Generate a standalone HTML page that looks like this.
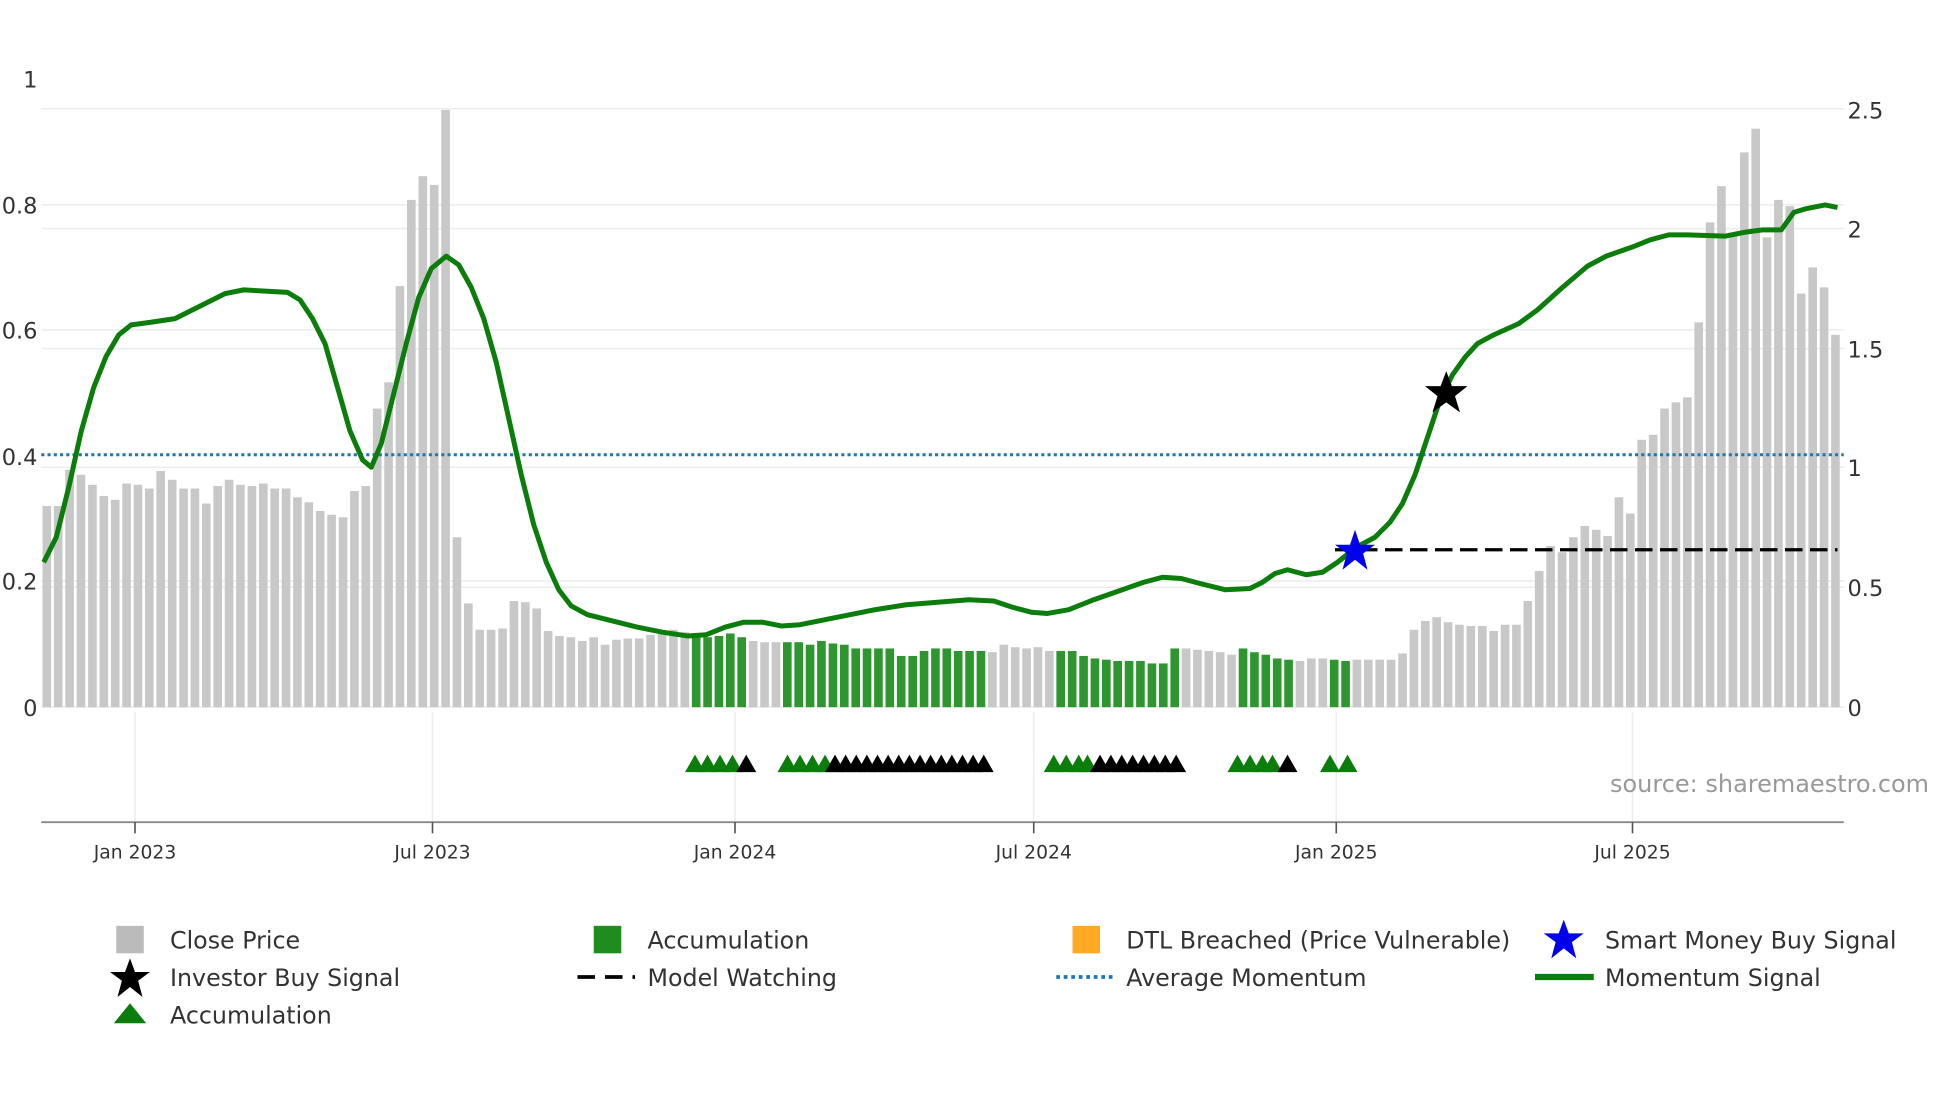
<!DOCTYPE html>
<html><head><meta charset="utf-8">
<style>
html,body{margin:0;padding:0;background:#fff;}
svg{display:block;}
text{font-family:"DejaVu Sans","Liberation Sans",sans-serif;fill:#333;}
</style></head>
<body>
<svg id="s" width="1960" height="1102" viewBox="0 0 1568 882" preserveAspectRatio="none" xmlns="http://www.w3.org/2000/svg">
<rect width="1568" height="882" fill="#fff"/>
<g stroke="#ececec" stroke-width="1.2">
<line x1="33" y1="87" x2="1475" y2="87"/>
<line x1="33" y1="164" x2="1475" y2="164"/>
<line x1="33" y1="183" x2="1475" y2="183"/>
<line x1="33" y1="264" x2="1475" y2="264"/>
<line x1="33" y1="279" x2="1475" y2="279"/>
<line x1="33" y1="374" x2="1475" y2="374"/>
<line x1="33" y1="465" x2="1475" y2="465"/>
<line x1="33" y1="470" x2="1475" y2="470"/>
<line x1="33" y1="566" x2="1475" y2="566"/>
<line x1="108" y1="570" x2="108" y2="658"/>
<line x1="346" y1="570" x2="346" y2="658"/>
<line x1="588" y1="570" x2="588" y2="658"/>
<line x1="827" y1="570" x2="827" y2="658"/>
<line x1="1069" y1="570" x2="1069" y2="658"/>
<line x1="1306" y1="570" x2="1306" y2="658"/>
</g>
<g id="bars"></g>
<g id="tris"></g>
<line x1="33" y1="364" x2="1475" y2="364" stroke="#1f77b4" stroke-width="2.4" stroke-dasharray="2.5,2.5"/>
<line x1="1068" y1="440" x2="1470" y2="440" stroke="#000" stroke-width="2.6" stroke-dasharray="14,6"/>
<path fill="none" stroke="#0a7d0a" stroke-width="4" stroke-linejoin="round" d="M35,450 L45,430 L55,390 L65,345 L75,310 L85,285 L95,268 L105,260 L120,258 L140,255 L160,245 L180,235 L195,232 L230,234 L240,240 L250,255 L260,275 L270,310 L280,345 L290,368 L297,374 L305,355 L315,315 L325,275 L335,238 L345,215 L357,205 L367,212 L377,230 L387,255 L397,290 L407,335 L417,380 L427,420 L437,450 L447,472 L457,485 L470,492 L490,497 L510,502 L530,506 L550,509 L565,508 L580,502 L595,498 L610,498 L625,501 L640,500 L660,496 L680,492 L700,488 L725,484 L750,482 L775,480 L795,481 L810,486 L825,490 L838,491 L855,488 L875,480 L895,473 L915,466 L930,462 L945,463 L960,467 L980,472 L1000,471 L1010,466 L1020,459 L1030,456 L1045,460 L1058,458 L1070,450 L1085,438 L1100,430 L1112,418 L1122,403 L1132,380 L1142,350 L1152,320 L1162,300 L1172,286 L1182,275 L1195,268 L1215,259 L1230,248 L1250,230 L1270,213 L1285,205 L1305,198 L1320,192 L1335,188 L1350,188 L1380,189 L1395,186 L1410,184 L1425,184 L1435,170 L1445,167 L1460,164 L1470,166"/>
<path d="M1157,297 L1161.5,309 L1174,309 L1164,317 L1168,330 L1157,322 L1146,330 L1150,317 L1140,309 L1152.5,309 Z" fill="#000"/>
<path d="M1084,424 L1088,436 L1100,436 L1090.5,443 L1094,456 L1084,448 L1074,456 L1077.5,443 L1068,436 L1080,436 Z" fill="#0000ee"/>
<line x1="33" y1="658" x2="1475" y2="658" stroke="#888" stroke-width="1.5"/>
<g stroke="#555" stroke-width="1.3">
<line x1="108" y1="658" x2="108" y2="667"/><line x1="346" y1="658" x2="346" y2="667"/>
<line x1="588" y1="658" x2="588" y2="667"/><line x1="827" y1="658" x2="827" y2="667"/>
<line x1="1069" y1="658" x2="1069" y2="667"/><line x1="1306" y1="658" x2="1306" y2="667"/>
</g>
<g font-size="15" text-anchor="middle">
<text x="108" y="687">Jan 2023</text><text x="346" y="687">Jul 2023</text>
<text x="588" y="687">Jan 2024</text><text x="827" y="687">Jul 2024</text>
<text x="1069" y="687">Jan 2025</text><text x="1306" y="687">Jul 2025</text>
</g>
<g font-size="18" text-anchor="end">
<text x="30" y="70">1</text><text x="30" y="171">0.8</text><text x="30" y="271">0.6</text>
<text x="30" y="372">0.4</text><text x="30" y="472">0.2</text><text x="30" y="573">0</text>
</g>
<g font-size="18">
<text x="1478" y="95">2.5</text><text x="1478" y="190">2</text><text x="1478" y="286">1.5</text>
<text x="1478" y="381">1</text><text x="1478" y="477">0.5</text><text x="1478" y="573">0</text>
</g>
<text x="1288" y="634" font-size="19.2" style="fill:#999">source: sharemaestro.com</text>
<g font-size="19">
<rect x="93" y="741" width="22" height="22" fill="#bbb"/><text x="136" y="759">Close Price</text>
<rect x="475" y="741" width="22" height="22" fill="#1e8c1e"/><text x="518" y="759">Accumulation</text>
<rect x="858" y="741" width="22" height="22" fill="#ffaa22"/><text x="901" y="759">DTL Breached (Price Vulnerable)</text>
<path d="M1251,736 L1255,747 L1267,747 L1257.5,754 L1261,767 L1251,759 L1241,767 L1244.5,754 L1235,747 L1247,747 Z" fill="#0000ee"/>
<text x="1284" y="759">Smart Money Buy Signal</text>
<path d="M104,767 L108,778 L120,778 L110.5,785 L114,798 L104,790 L94,798 L97.5,785 L88,778 L100,778 Z" fill="#000"/>
<text x="136" y="789">Investor Buy Signal</text>
<line x1="462" y1="782" x2="508" y2="782" stroke="#000" stroke-width="3" stroke-dasharray="14,8"/>
<text x="518" y="789">Model Watching</text>
<line x1="845" y1="782" x2="891" y2="782" stroke="#1f77b4" stroke-width="3" stroke-dasharray="3,3"/>
<text x="901" y="789">Average Momentum</text>
<line x1="1228" y1="782" x2="1275" y2="782" stroke="#0a7d0a" stroke-width="5"/>
<text x="1284" y="789">Momentum Signal</text>
<path d="M91,819 L104,803 L117,819 Z" fill="#0a7d0a"/>
<text x="136" y="819">Accumulation</text>
</g>
</svg>
<script>
var tops=[405,405,376,380,388,397,400,387,388,391,377,384,391,391,403,389,384,388,389,387,391,391,398,402,409,412,414,393,389,327,306,229,160,141,148,88,430,483,504,504,503,481,482,487,505,509,510,513,510,516,512,511,511,508,506,504,506,508,510,509,507,510,513,514,514,514,514,516,513,515,516,519,519,519,519,525,525,521,519,519,521,521,521,522,516,518,519,518,521,521,521,525,527,528,529,529,529,531,531,519,519,520,521,522,524,519,522,524,527,528,529,527,527,528,529,528,528,528,528,523,504,497,494,498,500,501,501,505,500,500,481,457,437,442,430,421,424,429,398,411,352,348,327,322,318,258,178,149,186,122,103,190,160,165,235,214,230,268];
var n=tops.length, x0=34, step=(1474-x0)/n, g=document.getElementById('bars'), h='';
var green=[[555,602],[629,787],[840,942],[988,1035],[1062,1080]];
for(var i=0;i<n;i++){var x=x0+i*step;var c='#c8c8c8';for(var j=0;j<green.length;j++){if(x+3>=green[j][0]&&x+3<=green[j][1])c='#2e962e';}
h+='<rect x="'+x.toFixed(1)+'" y="'+tops[i]+'" width="'+(step-2.2).toFixed(1)+'" height="'+(566-tops[i])+'" fill="'+c+'"/>';}
g.innerHTML=h;
var t='',tri=function(cx,col){t+='<path d="M'+(cx-8)+',618 L'+cx+',604 L'+(cx+8)+',618 Z" fill="'+col+'"/>';};
[556,566,576,586].forEach(function(x){tri(x,'#0a7d0a')});tri(597,'#000');
[630,640,650,660].forEach(function(x){tri(x,'#0a7d0a')});for(var x=668;x<=787;x+=8.5)tri(x,'#000');
[843,853,863,870].forEach(function(x){tri(x,'#0a7d0a')});for(var x=880;x<=941;x+=8.7)tri(x,'#000');
[990,1000,1010,1018].forEach(function(x){tri(x,'#0a7d0a')});tri(1030,'#000');
[1064,1078].forEach(function(x){tri(x,'#0a7d0a')});
document.getElementById('tris').innerHTML=t;
</script>
</body></html>
